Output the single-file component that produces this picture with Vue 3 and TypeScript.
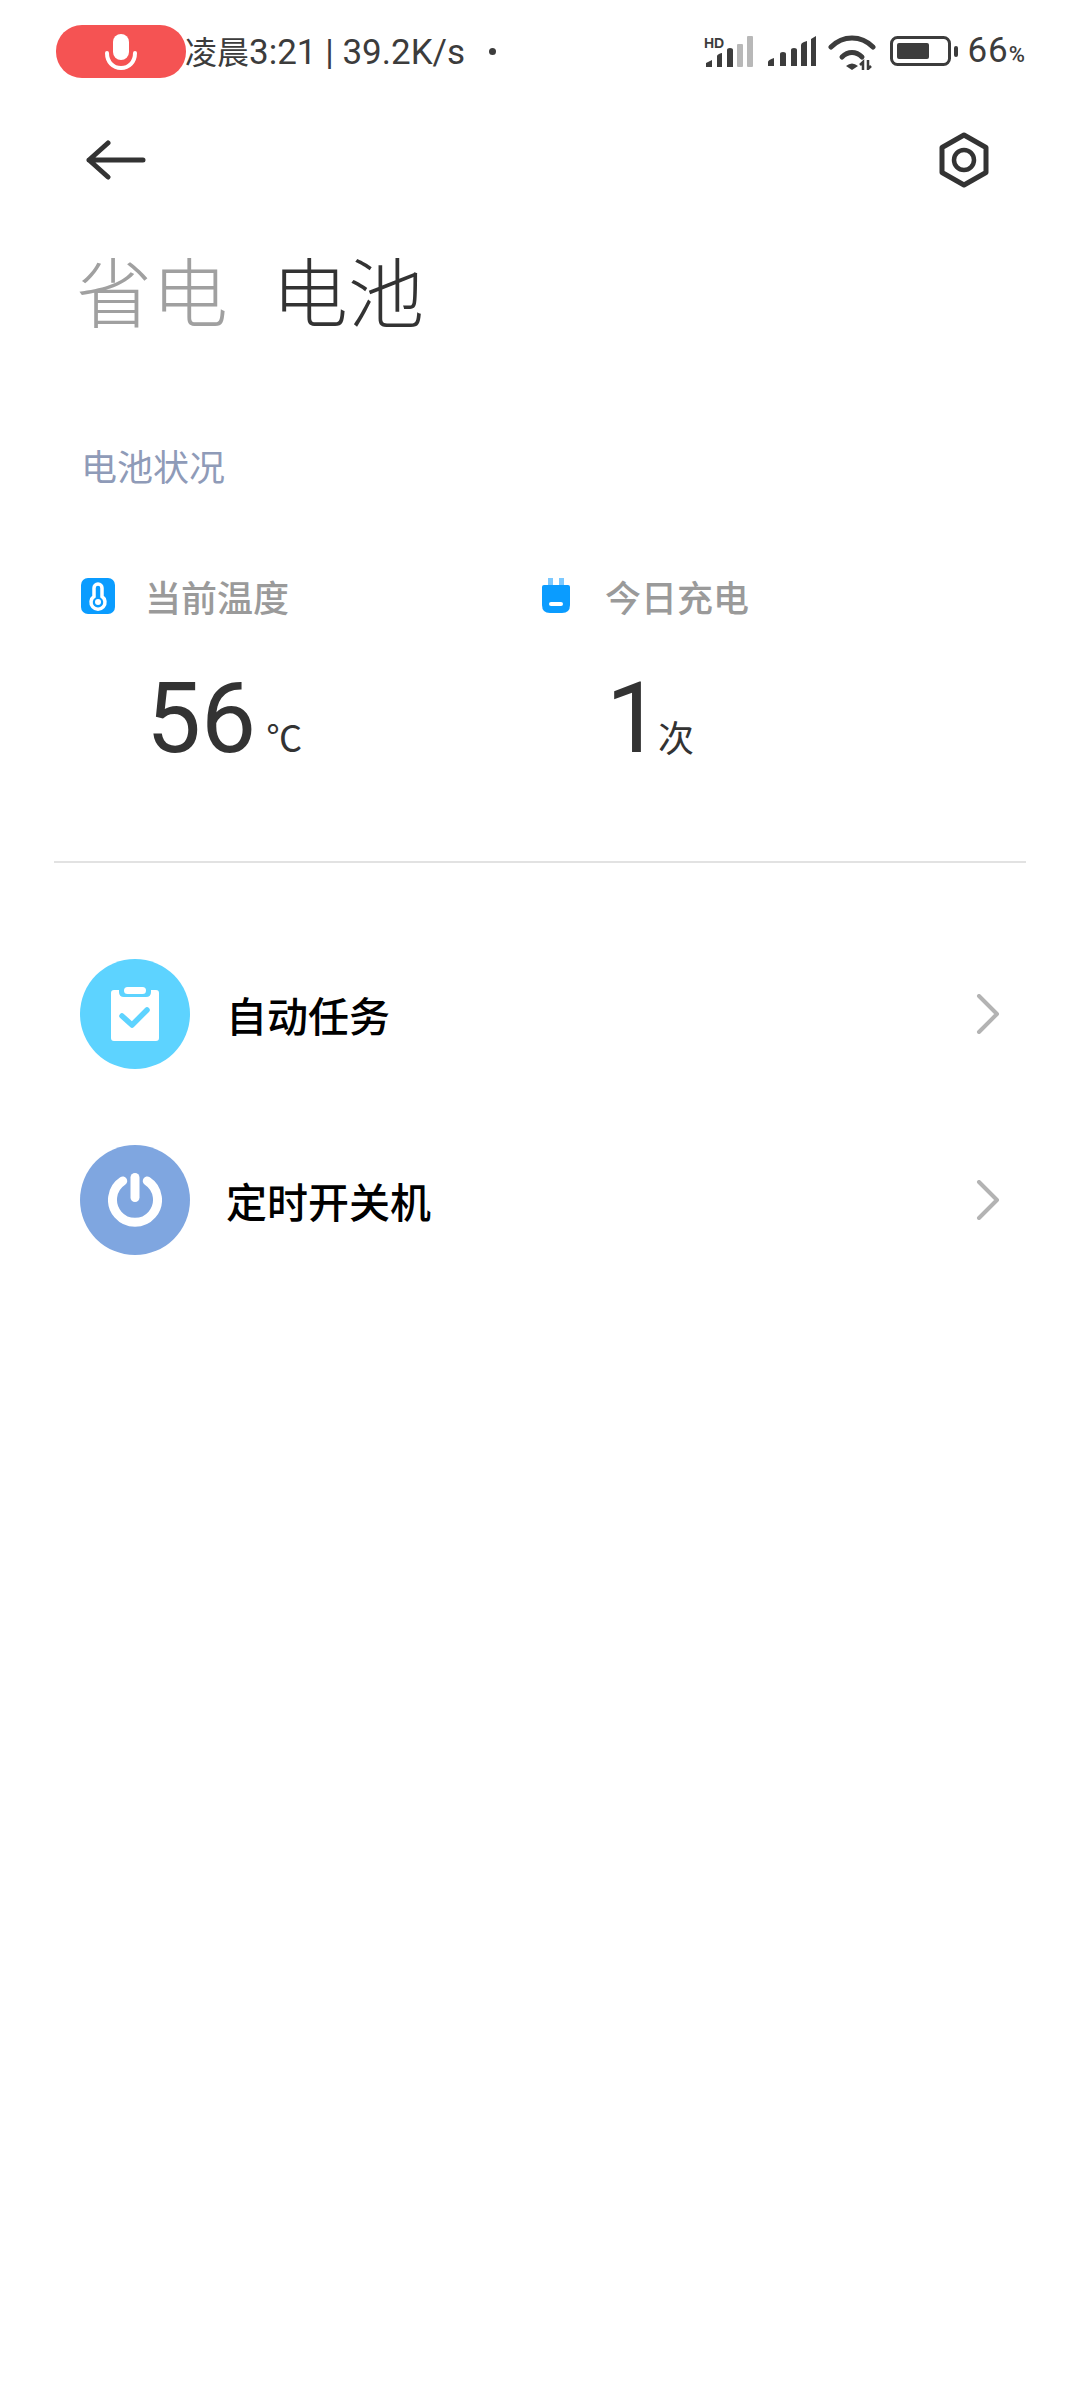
<script setup lang="ts">
interface Stat {
  label: string
  value: string
  unit: string
  icon: 'temp' | 'plug'
}

interface Row {
  title: string
  icon: 'task' | 'power'
}

const stats: Stat[] = [
  { label: '当前温度', value: '56', unit: '℃', icon: 'temp' },
  { label: '今日充电', value: '1', unit: '次', icon: 'plug' }
]

const rows: Row[] = [
  { title: '自动任务', icon: 'task' },
  { title: '定时开关机', icon: 'power' }
]
</script>

<template>
  <div class="page">
    <!-- 状态栏 -->
    <div class="status-bar">
      <div class="mic-pill">
        <svg width="34" height="38" viewBox="0 0 34 38">
          <rect x="9" y="1" width="16" height="26" rx="8" fill="#fff" />
          <path d="M3 20c0 9 6 15 14 15s14-6 14-15" fill="none" stroke="#fff" stroke-width="4" stroke-linecap="round" />
        </svg>
      </div>
      <span class="status-text"><span class="status-cjk">凌晨</span>3:21 | 39.2K/s</span>
      <span class="status-dot"></span>
      <div class="status-right">
        <svg class="signal" width="52" height="34" viewBox="0 0 52 34">
          <text x="0" y="13" class="hd">HD</text>
          <path d="M2 32v-4l6-3v7zM13 32V21h0q0-1 2-2t3-1v14zM23 32V15q0-2 3-2t3 2v17z" fill="#3c3c3c" />
          <rect x="33" y="9" width="6" height="23" rx="1" fill="#b8b8b8" />
          <rect x="43" y="1" width="6" height="31" rx="1" fill="#b8b8b8" />
        </svg>
        <svg class="signal-b" width="48" height="31" viewBox="0 0 48 31">
          <path d="M0 30v-4q0-2 6-4v8zM12 30V18q0-2 3-2t3 2v12zM23 30V14q0-2 3-2t3 2v16zM33 30V9q0-2 3-3l3-1v25zM43 30V3l5-3v30z" fill="#3c3c3c" />
        </svg>
        <svg class="wifi" width="48" height="36" viewBox="0 0 48 36">
          <path d="M3 13C15 1 33 1 45 13" fill="none" stroke="#3c3c3c" stroke-width="5" stroke-linecap="round" />
          <path d="M14 23c6-6 14-6 20 0" fill="none" stroke="#3c3c3c" stroke-width="5" stroke-linecap="round" />
          <path d="M18 32q6-5 12 0l-6 4z" fill="#3c3c3c" />
          <path d="M35 36v-8l-3 3M40 26v9l3-3" fill="none" stroke="#3c3c3c" stroke-width="2.500" />
        </svg>
        <svg class="battery" width="69" height="31" viewBox="0 0 69 31">
          <rect x="1.500" y="1.500" width="58" height="27" rx="6" fill="none" stroke="#3c3c3c" stroke-width="3" />
          <rect x="7" y="7" width="32" height="16" rx="2" fill="#3c3c3c" />
          <rect x="64" y="10" width="4" height="11" rx="2" fill="#3c3c3c" />
        </svg>
        <span class="battery-num">66<small>%</small></span>
      </div>
    </div>

    <!-- 顶部导航 -->
    <div class="nav-bar">
      <svg width="60" height="40" viewBox="0 0 60 40">
        <path d="M22 3L3 20l19 17M3 20h54" fill="none" stroke="#333" stroke-width="5" stroke-linecap="round" stroke-linejoin="round" />
      </svg>
      <svg width="52" height="56" viewBox="0 0 52 56">
        <path d="M26 3l22 12.500v25L26 53 4 40.500v-25z" fill="none" stroke="#333" stroke-width="5" stroke-linejoin="round" />
        <circle cx="26" cy="28" r="10" fill="none" stroke="#333" stroke-width="4.500" />
      </svg>
    </div>

    <div class="tabs">
      <span class="tab">省电</span>
      <span class="tab active">电池</span>
    </div>

    <div class="section-title">电池状况</div>

    <div class="stats">
      <div v-for="stat in stats" :key="stat.label" class="stat">
        <div class="stat-head">
          <span class="stat-icon">
            <svg v-if="stat.icon === 'temp'" width="34" height="36" viewBox="0 0 34 36">
              <rect width="34" height="36" rx="7" fill="#0a9cff" />
              <path d="M17 6a4 4 0 0 1 4 4v8.500a7 7 0 1 1-8 0V10a4 4 0 0 1 4-4z" fill="none" stroke="#fff" stroke-width="3.500" />
              <circle cx="17" cy="24" r="3" fill="#fff" />
            </svg>
            <svg v-else width="34" height="36" viewBox="0 0 34 36">
              <rect x="7" y="0" width="5" height="8" fill="#7cc9ff" />
              <rect x="18" y="0" width="5" height="8" fill="#7cc9ff" />
              <path d="M1 9q0-2 2-2h24q2 0 2 2v18q0 8-8 8H9q-8 0-8-8z" fill="#0a9cff" />
              <rect x="8" y="24" width="14" height="4" rx="2" fill="#fff" />
            </svg>
          </span>
          <span class="stat-label">{{ stat.label }}</span>
        </div>
        <div class="stat-value">
          <span class="num">{{ stat.value }}</span>
          <span class="unit" :class="stat.icon">{{ stat.unit }}</span>
        </div>
      </div>
    </div>

    <div class="divider"></div>

    <div class="list">
      <div v-for="row in rows" :key="row.title" class="row">
        <span class="row-icon" :class="row.icon">
          <svg v-if="row.icon === 'task'" width="48" height="54" viewBox="0 0 48 54">
            <path d="M3 3h5v2q0 5 5 5h22q5 0 5-5V3h5q3 0 3 3v45q0 3-3 3H3q-3 0-3-3V6q0-3 3-3z" fill="#fff" />
            <rect x="13" y="0" width="22" height="7" rx="3.500" fill="#fff" />
            <path d="M11 29l10 9 15-15" fill="none" stroke="#5dd3ff" stroke-width="5.500" stroke-linecap="round" stroke-linejoin="round" />
          </svg>
          <svg v-else width="54" height="54" viewBox="0 0 54 54">
            <path d="M14.700 8a22.500 22.500 0 1 0 24.600 0" fill="none" stroke="#fff" stroke-width="9" stroke-linecap="round" />
            <path d="M27 4.500v20" fill="none" stroke="#fff" stroke-width="9" stroke-linecap="round" />
          </svg>
        </span>
        <span class="row-title">{{ row.title }}</span>
        <svg class="chevron" width="24" height="40" viewBox="0 0 24 40">
          <path d="M3 2l18 18L3 38" fill="none" stroke="#b3b3b3" stroke-width="4" stroke-linecap="round" stroke-linejoin="round" />
        </svg>
      </div>
    </div>
  </div>
</template>

<style>
html,
body {
  margin: 0;
  background: #fff;
}
</style>

<style scoped>
.page {
  width: 1080px;
  height: 2400px;
  background: #fff;
  overflow: hidden;
  font-family: Roboto, "Noto Sans CJK SC", sans-serif;
  color: #333;
}

/* 状态栏 */
.status-bar {
  display: flex;
  align-items: center;
  height: 53px;
  padding: 25px 54px 0 56px;
  color: #3c3c3c;
}

.mic-pill {
  width: 130px;
  height: 53px;
  border-radius: 26px;
  background: #f55353;
  display: flex;
  align-items: center;
  justify-content: center;
  flex-shrink: 0;
}

.status-text {
  margin-left: -1px;
  padding-bottom: 3px;
  font-size: 35px;
  white-space: nowrap;
}

.status-cjk {
  font-size: 32px;
}

.status-dot {
  width: 7px;
  height: 7px;
  border-radius: 50%;
  background: #3c3c3c;
  margin-left: 24px;
}

.status-right {
  margin-left: auto;
  display: flex;
  align-items: center;
}

.hd {
  font: 700 14px "Liberation Sans", sans-serif;
  fill: #3c3c3c;
}

.signal-b {
  margin-left: 12px;
}

.wifi {
  margin-left: 12px;
}

.battery {
  margin-left: 14px;
}

.battery-num {
  margin-left: 8px;
  padding-bottom: 3px;
  font-size: 35px;
  letter-spacing: 1px;
}

.battery-num small {
  font-size: 22px;
  font-weight: 500;
}

/* 导航 */
.nav-bar {
  display: flex;
  align-items: center;
  justify-content: space-between;
  height: 56px;
  margin-top: 54px;
  padding: 0 90px 0 86px;
}

.tabs {
  display: flex;
  gap: 44px;
  margin-top: 63px;
  padding-left: 76px;
}

.tab {
  font-size: 76px;
  line-height: 90px;
  font-weight: 300;
  color: #a0a0a0;
}

.tab.active {
  color: #333;
}

.section-title {
  margin-top: 103px;
  padding-left: 81px;
  font-size: 36px;
  line-height: 50px;
  color: #8f9bb8;
}

.stats {
  display: flex;
  margin-top: 82px;
  padding-left: 81px;
}

.stat {
  width: 460px;
}

.stat-head {
  display: flex;
  align-items: center;
  height: 40px;
}

.stat-icon {
  width: 34px;
  height: 36px;
  display: flex;
}

.stat-label {
  margin-left: 30px;
  font-size: 36px;
  font-weight: 500;
  color: #9a9a9a;
}

.stat-value {
  display: flex;
  align-items: baseline;
  margin-top: 53px;
  padding-left: 65px;
  line-height: 100px;
}

.num {
  font-size: 98px;
  font-weight: 400;
  color: #333;
}

.unit {
  margin-left: 10px;
  font-size: 36px;
  color: #333;
}

.unit.plug {
  margin-left: -3px;
}

.divider {
  height: 2px;
  margin: 71px 54px 0;
  background: #e2e2e2;
}

.list {
  margin-top: 96px;
  padding: 0 80px 0 80px;
}

.row {
  display: flex;
  align-items: center;
  height: 110px;
  margin-bottom: 76px;
}

.row-icon {
  width: 110px;
  height: 110px;
  border-radius: 50%;
  display: flex;
  align-items: center;
  justify-content: center;
  flex-shrink: 0;
}

.row-icon.task {
  background: #5dd3ff;
}

.row-icon.power {
  background: #7fa6e0;
}

.row-title {
  margin-left: 36px;
  font-size: 41px;
  font-weight: 500;
  color: #000;
}

.chevron {
  margin-left: auto;
}
</style>
